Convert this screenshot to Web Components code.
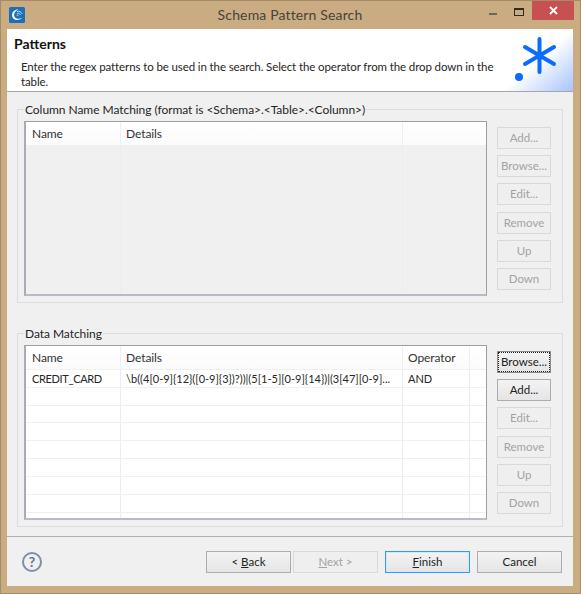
<!DOCTYPE html>
<html>
<head>
<meta charset="utf-8">
<title>Schema Pattern Search</title>
<style>
  html, body { margin: 0; padding: 0; background: #c9ac82; }
  body { font: 12px/15px Lato, "Open Sans", sans-serif; color: #262626; }
</style>
</head>
<body>
<wizard-window>
  <title-bar slot="title">Schema Pattern Search</title-bar>
  <wizard-header slot="header" heading="Patterns">Enter the regex patterns to be used in the search. Select the operator from the drop down in the table.</wizard-header>

  <group-box label="Column Name Matching (format is &lt;Schema&gt;.&lt;Table&gt;.&lt;Column&gt;)">
    <data-table disabled options='{"columns":["Name","Details",""],"widths":[95,282,83],"rows":[]}'></data-table>
    <push-button slot="actions" disabled>Add...</push-button>
    <push-button slot="actions" disabled>Browse...</push-button>
    <push-button slot="actions" disabled>Edit...</push-button>
    <push-button slot="actions" disabled>Remove</push-button>
    <push-button slot="actions" disabled>Up</push-button>
    <push-button slot="actions" disabled>Down</push-button>
  </group-box>

  <group-box label="Data Matching">
    <data-table options='{"columns":["Name","Details","Operator",""],"widths":[95,282,67,16],"rows":[["CREDIT_CARD","\\b((4[0-9]{12}([0-9]{3})?))|(5[1-5][0-9]{14})|(3[47][0-9]...","AND",""],["","","",""],["","","",""],["","","",""],["","","",""],["","","",""],["","","",""],["","","",""],["","","",""]]}'></data-table>
    <push-button slot="actions" focused>Browse...</push-button>
    <push-button slot="actions">Add...</push-button>
    <push-button slot="actions" disabled>Edit...</push-button>
    <push-button slot="actions" disabled>Remove</push-button>
    <push-button slot="actions" disabled>Up</push-button>
    <push-button slot="actions" disabled>Down</push-button>
  </group-box>

  <wizard-footer slot="footer">
    <push-button wide>&lt; <u>B</u>ack</push-button>
    <push-button wide disabled><u>N</u>ext &gt;</push-button>
    <push-button wide primary class="finish"><u>F</u>inish</push-button>
    <push-button wide>Cancel</push-button>
  </wizard-footer>
</wizard-window>

<script>
'use strict';

customElements.define('wizard-window', class extends HTMLElement {
  constructor() {
    super();
    this.attachShadow({mode: 'open'}).innerHTML = `
      <style>
        :host { display: flex; flex-direction: column; box-sizing: border-box; width: 581px; height: 594px;
                background: #c9ac82; border: 1px solid #a58c68; padding: 0 7px 7px 6px; }
        .client { flex: 1; display: flex; flex-direction: column; background: #f0f0f0; min-height: 0; }
        .body { flex: 1; display: flex; flex-direction: column; gap: 23px; padding: 10px 10px 8px; }
      </style>
      <slot name="title"></slot>
      <div class="client">
        <slot name="header"></slot>
        <div class="body"><slot></slot></div>
        <slot name="footer"></slot>
      </div>`;
  }
});

customElements.define('title-bar', class extends HTMLElement {
  constructor() {
    super();
    this.attachShadow({mode: 'open'}).innerHTML = `
      <style>
        :host { display: grid; grid-template-columns: 1fr auto 1fr; align-items: start; height: 28px; margin: 0 -6px 0 -6px; color: #4a4238; }
        .icon { margin: 6px 0 0 8px; width: 16px; height: 16px; display: block; }
        .title { font: 14px/28px Lato, sans-serif; letter-spacing: .15px; }
        .controls { display: flex; align-items: flex-start; justify-content: flex-end; margin-right: 5px; }
        .min { width: 8px; height: 2px; background: #6e675c; margin: 12px 17px 0 0; }
        .max { box-sizing: border-box; width: 10px; height: 8px; border: 1px solid #2e2a25; border-top-width: 2px; margin: 7px 8px 0 0; }
        .close { width: 42px; height: 19px; background: #c75050; color: #fff; display: flex; align-items: center; justify-content: center; }
      </style>
      <svg class="icon" viewBox="0 0 16 16">
        <rect width="16" height="16" rx="1.5" fill="#1d6fb8"/>
        <path d="M9.5 2.6C5.6 2.4 3 5 3 8.2c0 2.9 2.5 5 5.6 4.8 1.9-.1 3.4-1 4.4-2.3-1.3.8-2.8 1.2-4.2 1C6.4 11.400 5 9.800 5.100 7.800 5.200 5.600 7 3.800 9.500 2.600z" fill="#eef6fc"/>
        <path d="M8 4.500c2-.6 4.300.2 5 2.300M7.800 6.500c1.200-.6 3-.1 3.500 1.300M7.600 8.500c.5-.6 1.500-.5 1.800.3" fill="none" stroke="#cfe4f4" stroke-width=".9"/>
      </svg>
      <div class="title"><slot></slot></div>
      <div class="controls">
        <div class="min"></div>
        <div class="max"></div>
        <div class="close">
          <svg width="9" height="9" viewBox="0 0 9 9"><path d="M1 1l7 7M8 1L1 8" stroke="#fff" stroke-width="1.800"/></svg>
        </div>
      </div>`;
  }
});

customElements.define('wizard-header', class extends HTMLElement {
  constructor() {
    super();
    this.attachShadow({mode: 'open'}).innerHTML = `
      <style>
        :host { display: flex; height: 62px; background: #fff; border-bottom: 1px solid #a6a6a6; flex: none; }
        .text { flex: 1; padding: 7px 0 0 7px; }
        h1 { margin: 0 0 7px; font: bold 14px/16px Lato, sans-serif; color: #111; }
        p { margin: 0 0 0 7px; width: 480px; font-size: 11.5px; letter-spacing: -.11px; }
        .logo { width: 70px; background: linear-gradient(to bottom right, #fff 50%, #a6c3fd 100%); }
        svg { display: block; }
      </style>
      <div class="text"><h1></h1><p><slot></slot></p></div>
      <div class="logo">
        <svg width="70" height="62" viewBox="0 0 70 62">
          <g stroke="#0a6cff" stroke-width="4" stroke-linecap="round">
            <path d="M36.500 10v33M22 18l29 17M51 18L22 35"/>
          </g>
          <circle cx="16" cy="48" r="4" fill="#0a6cff"/>
        </svg>
      </div>`;
    this.shadowRoot.querySelector('h1').textContent = this.getAttribute('heading');
  }
});

customElements.define('group-box', class extends HTMLElement {
  constructor() {
    super();
    this.attachShadow({mode: 'open'}).innerHTML = `
      <style>
        :host { display: block; }
        fieldset { margin: 0; border: 1px solid #dcdcdc; padding: 4px 11px 6px 6px; display: flex; gap: 10px; height: 201px; box-sizing: border-box; }
        legend { padding: 0 1px; margin-left: 0; line-height: 15px; letter-spacing: -.05px; }
        .actions { display: flex; flex-direction: column; gap: 6px; padding-top: 6px; }
        ::slotted(data-table) { flex: 1; }
        /* the reference has one pixel more above Remove */
        ::slotted(:nth-child(5)) { margin-top: 1px; }
      </style>
      <fieldset>
        <legend></legend>
        <slot></slot>
        <div class="actions"><slot name="actions"></slot></div>
      </fieldset>`;
    this.shadowRoot.querySelector('legend').textContent = this.getAttribute('label');
  }
});

customElements.define('data-table', class extends HTMLElement {
  constructor() {
    super();
    const options = JSON.parse(this.getAttribute('options'));
    const template = options.widths.map(w => w + 'px').join(' ');
    const row = (cells, cls) => `<div class="row ${cls}" style="grid-template-columns:${template}">` +
      cells.map(c => `<div class="cell">${c.replace(/</g, '&lt;')}</div>`).join('') + '</div>';
    let body = options.rows.map(r => row(r, 'item')).join('');
    if (!options.rows.length) {
      body = row(options.columns.map(() => ''), 'filler');
    }
    this.attachShadow({mode: 'open'}).innerHTML = `
      <style>
        :host { display: flex; flex-direction: column; box-sizing: border-box; overflow: hidden; background: #fff;
                border: 1px solid #a0a0a0; border-left: 2px solid #a8acb4; border-bottom: 2px solid #b8bbc3; min-width: 0; }
        :host([disabled]) { background: #f0f0f0; }
        .row { display: grid; }
        .head { height: 23px; flex: none; background: linear-gradient(#fff, #fbfbfb); color: #333; letter-spacing: -.08px; }
        .head .cell { border-right-color: #eceff3; line-height: 23px; }
        .body { flex: 1; display: flex; flex-direction: column; min-height: 0; border-top: 1px solid #f0f0f0; }
        :host([disabled]) .body { border-top: 0; }
        .item { height: 18px; flex: none; box-sizing: border-box; border-bottom: 1px solid #f0f0f0; font-size: 11px; }
        .item:nth-child(3) { height: 17px; }
        .item .cell:first-child { letter-spacing: -.35px; }
        .filler { flex: 1; }
        .cell { padding: 0 5px 0 6px; line-height: 17px; border-right: 1px solid #e8eef8; white-space: nowrap; overflow: hidden; min-width: 0; box-sizing: border-box; }
        .cell + .cell { padding-left: 5px; }
        .cell:last-child { border-right: 0; }
      </style>
      ${row(options.columns, 'head')}
      <div class="body">${body}</div>`;
  }
});

customElements.define('push-button', class extends HTMLElement {
  constructor() {
    super();
    this.attachShadow({mode: 'open'}).innerHTML = `
      <style>
        :host { display: flex; align-items: center; justify-content: center; box-sizing: border-box; width: 54px; height: 22px; font-size: 11.5px;
                border: 1px solid #adadad; background: linear-gradient(#f3f3f3, #e5e5e5); color: #222; white-space: pre; }
        :host([wide]) { width: 85px; }
        :host([disabled]) { border-color: #d9d9d9; background: #efefef; color: #a3a3a3; }
        :host([primary]) { border: 1px solid #3399ff; box-shadow: inset 0 0 0 1px #d5e8fb; }
        :host([focused]) { border-color: #8a8a8a; outline: 1px dotted #222; outline-offset: -2px; }
        span { margin-top: -1px; }
      </style>
      <span><slot></slot></span>`;
  }
});

customElements.define('wizard-footer', class extends HTMLElement {
  constructor() {
    super();
    this.attachShadow({mode: 'open'}).innerHTML = `
      <style>
        :host { display: flex; align-items: flex-start; height: 50px; flex: none; box-sizing: border-box; border-top: 1px solid #b0b0b0; padding: 14px 11px 0 15px; }
        .help { box-sizing: border-box; width: 20px; height: 20px; border-radius: 50%; border: 2px solid #7c8ea9; color: #5f7391;
                font: bold 14px/16px Lato, sans-serif; text-align: center; margin-top: 1px; }
        .buttons { flex: 1; display: flex; justify-content: flex-end; }
        ::slotted(push-button) { margin-left: 2px; }
        ::slotted(.finish) { margin-left: 7px; margin-right: 5px; }
      </style>
      <div class="help">?</div>
      <div class="buttons"><slot></slot></div>`;
  }
});
</script>
</body>
</html>
